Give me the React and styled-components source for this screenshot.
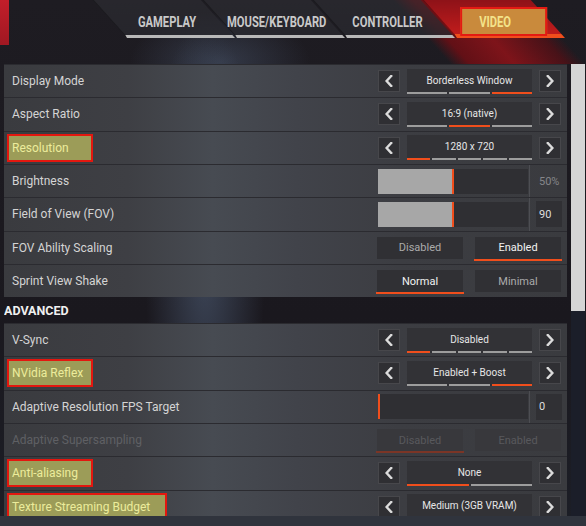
import React from 'react';
import styled, { createGlobalStyle, css } from 'styled-components';

const ORANGE = '#f04e1c';

const Global = createGlobalStyle`
  html, body { margin: 0; padding: 0; background: #1b1a1f; }
  body { width: 586px; height: 526px; overflow: hidden; font-family: Roboto, "Noto Sans", sans-serif; }
`;

const Page = styled.div`
  width: 586px;
  height: 526px;
  overflow: hidden;
  display: flex;
  flex-direction: column;
  background:
    radial-gradient(ellipse 60px 240px at 205px 260px, rgba(95, 115, 145, 0.5), transparent 100%),
    radial-gradient(ellipse 90px 50px at 220px 62px, rgba(80, 95, 120, 0.45), transparent 100%),
    linear-gradient(180deg, #1e1c22, #1a181e 60%, #1c1e26);
`;

const Header = styled.header`
  height: 64px;
  flex: none;
  background:
    linear-gradient(#c21e2a, #a01822) 0 0 / 9px 45px no-repeat,
    linear-gradient(48deg, transparent 70%, rgba(110, 14, 20, 0.85) 73%, rgba(150, 18, 24, 0.8) 80%, rgba(100, 12, 18, 0.6) 88%, transparent 91%);
`;

const TabStrip = styled.nav`
  display: flex;
  gap: 2px;
  padding-left: 127px;
  height: 38px;
`;

const Tab = styled.div`
  width: 108px;
  height: 38px;
  box-sizing: border-box;
  padding-top: 8px;
  transform: skewX(42deg);
  transform-origin: bottom left;
  border-bottom: ${p => (p.$active ? `4px solid ${ORANGE}` : '3px solid #b9b9b9')};
  border-left: 1px solid rgba(0, 0, 0, 0.35);
  background: ${p =>
    p.$active
      ? 'linear-gradient(180deg, #8e1218, #c01c1c)'
      : 'linear-gradient(180deg, rgba(48,48,54,0.55), rgba(40,40,46,0.8))'};
  display: flex;
  align-items: center;
  justify-content: center;
`;

const TabText = styled.span`
  transform: skewX(-42deg);
  display: flex;
  align-items: center;
  justify-content: center;
  ${p =>
    p.$mark &&
    css`
      margin-left: 13px;
      width: 87px;
      height: 29px;
      box-sizing: border-box;
      justify-content: flex-start;
      padding-left: 17px;
      border: 2px solid #e41a12;
      background: #c98a3c;
    `}
`;

const TabGlyphs = styled.span`
  display: inline-block;
  font: 700 14px/1 Roboto, sans-serif;
  white-space: nowrap;
  transform: scaleX(0.8);
  transform-origin: ${p => (p.$mark ? 'left center' : 'center')};
  color: ${p => (p.$mark ? '#f3e38a' : '#c9c9c9')};
`;

const Main = styled.main`
  flex: none;
  height: 452px;
  display: flex;
`;

const List = styled.div`
  margin-left: 4px;
  width: 563px;
  overflow: hidden;
  display: flex;
  flex-direction: column;
`;

const Scrollbar = styled.div`
  margin-left: 4px;
  width: 14px;
  display: flex;
  flex-direction: column;
`;

const Thumb = styled.div`
  height: 247px;
  background: #d5d5d5;
`;

const ScrollTrack = styled.div`
  flex: 1;
  background: #1b1e29;
`;

const Footer = styled.footer`
  flex: 1;
  background: #30343d;
`;

const Row = styled.div`
  height: 33.33px;
  flex: none;
  box-sizing: border-box;
  border-top: 1.5px solid #2b2b30;
  display: flex;
  align-items: center;
  justify-content: space-between;
  padding: 0 6px 0 8px;
  background: linear-gradient(90deg, #3a3b3f 0%, #3e3f44 22%, #474b52 37%, #41434a 52%, #3c3d42 70%, #3a3b3f 100%);
`;

const SectionTitle = styled.div`
  height: 25.7px;
  flex: none;
  box-sizing: border-box;
  padding-top: 3px;
  display: flex;
  align-items: center;
  font: 700 12.5px/1 Roboto, sans-serif;
  color: #f0f0f0;
`;

const Label = styled.span`
  font-size: 12px;
  white-space: nowrap;
  color: ${p => (p.$dim ? '#5f6064' : '#d4d4d4')};
  ${p =>
    p.$mark &&
    css`
      margin-left: -5px;
      box-sizing: border-box;
      width: ${p.$mark}px;
      height: 28px;
      display: flex;
      align-items: center;
      padding: 0 3px;
      border: 2px solid #e3170f;
      background: #9c9c58;
      color: #ecec9c;
    `}
`;

const Selector = styled.div`
  display: flex;
  gap: 7px;
  align-items: center;
`;

const ArrowBtn = styled.div`
  width: 22px;
  height: 22px;
  box-sizing: border-box;
  background: #2f2f33;
  border: 1px solid #47474b;
  display: flex;
  align-items: center;
  justify-content: center;
`;

const ValueBox = styled.div`
  width: 125px;
  height: 25px;
  display: flex;
  flex-direction: column;
  background: #323236;
`;

const ValueText = styled.div`
  flex: 1;
  display: flex;
  align-items: center;
  justify-content: center;
  font-size: 10px;
  color: #e6e6e6;
  white-space: nowrap;
`;

const Segments = styled.div`
  display: flex;
  gap: 2px;
  height: 2px;
`;

const Seg = styled.div`
  flex: 1;
  background: ${p => (p.$on ? ORANGE : '#9d9d9d')};
`;

const SliderWrap = styled.div`
  display: flex;
  align-self: stretch;
  align-items: center;
`;

const Track = styled.div`
  width: 150px;
  height: 25px;
  background: #2f2f33;
  display: flex;
`;

const Fill = styled.div`
  height: 100%;
  background: #a7a7a7;
  border-right: 2.5px solid ${ORANGE};
`;

const NumCell = styled.div`
  align-self: stretch;
  width: 32px;
  margin-left: 1px;
  box-sizing: border-box;
  border-left: 1px solid #4d4e53;
  padding-left: 6px;
  display: flex;
  align-items: center;
`;

const NumBox = styled.div`
  flex: none;
  width: 26px;
  height: 26px;
  box-sizing: border-box;
  padding-left: 3px;
  display: flex;
  align-items: center;
  font-size: 11px;
  background: ${p => (p.$plain ? 'transparent' : '#303034')};
  color: ${p => (p.$plain ? '#85868a' : '#dedede')};
`;

const Toggle = styled.div`
  display: flex;
  gap: 12px;
`;

const Opt = styled.div`
  position: relative;
  width: 86px;
  height: 22px;
  display: flex;
  align-items: center;
  justify-content: center;
  font-size: 11px;
  background: ${p => (p.$disabled ? '#38383c' : '#303034')};
  color: ${p => (p.$disabled ? '#58595d' : p.$on ? '#f2f2f2' : '#ababab')};
  ${p =>
    p.$on &&
    css`
      &::after {
        content: '';
        position: absolute;
        left: -1px;
        right: -1px;
        bottom: -2px;
        height: 2px;
        background: ${p.$disabled ? '#7b3526' : ORANGE};
      }
    `}
`;

const Chevron = ({ dir }) => (
  <svg width="8" height="12" viewBox="0 0 8 12">
    <polyline
      points={dir === 'left' ? '6.2,1 1.6,6 6.2,11' : '1.8,1 6.4,6 1.8,11'}
      fill="none"
      stroke="#dcdcdc"
      strokeWidth="2.4"
      strokeLinecap="square"
    />
  </svg>
);

const SelectControl = ({ value, segs, active }) => (
  <Selector>
    <ArrowBtn><Chevron dir="left" /></ArrowBtn>
    <ValueBox>
      <ValueText>{value}</ValueText>
      <Segments>
        {Array.from({ length: segs }).map((_, i) => (
          <Seg key={i} $on={i === active} />
        ))}
      </Segments>
    </ValueBox>
    <ArrowBtn><Chevron dir="right" /></ArrowBtn>
  </Selector>
);

const SliderControl = ({ fill, value, plain }) => (
  <SliderWrap>
    <Track>
      <Fill style={{ width: fill }} />
    </Track>
    <NumCell>
      <NumBox $plain={plain}>{value}</NumBox>
    </NumCell>
  </SliderWrap>
);

const ToggleControl = ({ options, active, disabled }) => (
  <Toggle>
    {options.map((o, i) => (
      <Opt key={o} $on={i === active} $disabled={disabled}>{o}</Opt>
    ))}
  </Toggle>
);

const Setting = ({ s }) => (
  <Row>
    <Label $mark={s.mark} $dim={s.disabled}>{s.label}</Label>
    {s.type === 'select' && <SelectControl {...s} />}
    {s.type === 'slider' && <SliderControl {...s} />}
    {s.type === 'toggle' && <ToggleControl {...s} />}
  </Row>
);

const basic = [
  { label: 'Display Mode', type: 'select', value: 'Borderless Window', segs: 3, active: 2 },
  { label: 'Aspect Ratio', type: 'select', value: '16:9 (native)', segs: 3, active: 1 },
  { label: 'Resolution', type: 'select', value: '1280 x 720', segs: 5, active: 0, mark: 86 },
  { label: 'Brightness', type: 'slider', fill: 74, value: '50%', plain: true },
  { label: 'Field of View (FOV)', type: 'slider', fill: 74, value: '90' },
  { label: 'FOV Ability Scaling', type: 'toggle', options: ['Disabled', 'Enabled'], active: 1 },
  { label: 'Sprint View Shake', type: 'toggle', options: ['Normal', 'Minimal'], active: 0 },
];

const advanced = [
  { label: 'V-Sync', type: 'select', value: 'Disabled', segs: 5, active: 0 },
  { label: 'NVidia Reflex', type: 'select', value: 'Enabled + Boost', segs: 3, active: 2, mark: 86 },
  { label: 'Adaptive Resolution FPS Target', type: 'slider', fill: 0, value: '0' },
  { label: 'Adaptive Supersampling', type: 'toggle', options: ['Disabled', 'Enabled'], active: 0, disabled: true },
  { label: 'Anti-aliasing', type: 'select', value: 'None', segs: 2, active: 0, mark: 86 },
  { label: 'Texture Streaming Budget', type: 'select', value: 'Medium (3GB VRAM)', segs: 4, active: 1, mark: 160 },
];

const tabs = ['GAMEPLAY', 'MOUSE/KEYBOARD', 'CONTROLLER', 'VIDEO'];

export default function App() {
  return (
    <>
      <Global />
      <Page>
        <Header>
          <TabStrip>
            {tabs.map(t => (
              <Tab key={t} $active={t === 'VIDEO'}>
                <TabText $mark={t === 'VIDEO'}>
                  <TabGlyphs $mark={t === 'VIDEO'}>{t}</TabGlyphs>
                </TabText>
              </Tab>
            ))}
          </TabStrip>
        </Header>
        <Main>
          <List>
            {basic.map(s => <Setting key={s.label} s={s} />)}
            <SectionTitle>ADVANCED</SectionTitle>
            {advanced.map(s => <Setting key={s.label} s={s} />)}
          </List>
          <Scrollbar>
            <Thumb />
            <ScrollTrack />
          </Scrollbar>
        </Main>
        <Footer />
      </Page>
    </>
  );
}
